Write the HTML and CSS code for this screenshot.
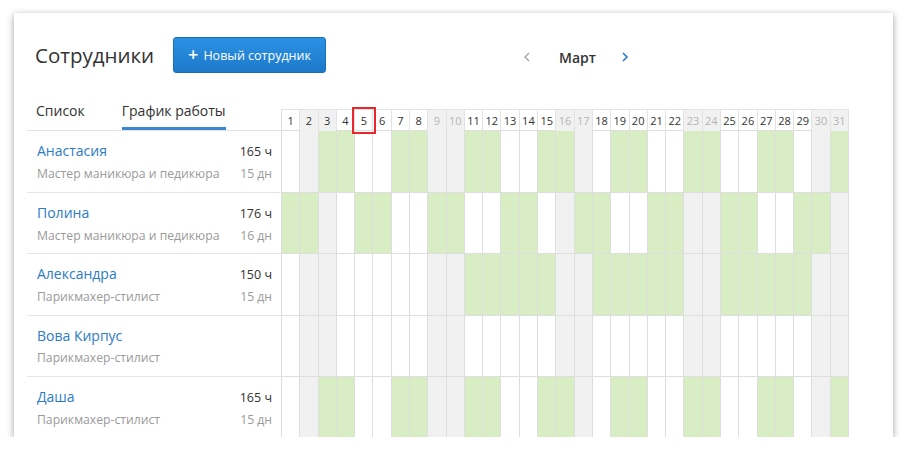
FILE: index.html
```html
<!DOCTYPE html>
<html lang="ru">
  <head>
    <meta charset="UTF-8" />
    <meta name="viewport" content="width=device-width, initial-scale=1.0" />
    <title>Сотрудники</title>
    <link rel="stylesheet" href="styles.css">
  </head>
  <body>
    <div class="card">
      <div class="top">
        <h1>Сотрудники</h1>
        <button class="btn-new" type="button"><span class="plus">+</span>Новый сотрудник</button>
        <div class="month">
          <svg class="arrow" width="8" height="10" viewBox="0 0 8 10"><polyline points="6,1 2,5 6,9" fill="none" stroke="#a0a0a0" stroke-width="1.3"/></svg>
          <span class="month-name">Март</span>
          <svg class="arrow" width="8" height="10" viewBox="0 0 8 10"><polyline points="2,1 6,5 2,9" fill="none" stroke="#2b7bc6" stroke-width="1.6"/></svg>
        </div>
      </div>

      <div class="row head">
        <div class="tabs">
          <a class="tab">Список</a>
          <a class="tab active">График работы</a>
        </div>
        <div class="days days-head" id="days-head"></div>
      </div>

      <div id="rows"></div>
    </div>

    <script>
      const weekends = [2, 3, 9, 10, 16, 17, 23, 24, 30, 31];
      const oddShift = [3, 4, 7, 8, 11, 12, 15, 16, 19, 20, 23, 24, 27, 28, 31];
      const people = [
        { name: "Анастасия", role: "Мастер маникюра и педикюра", hours: "165 ч", days: "15 дн", work: oddShift },
        { name: "Полина", role: "Мастер маникюра и педикюра", hours: "176 ч", days: "16 дн",
          work: [1, 2, 5, 6, 9, 10, 13, 14, 17, 18, 21, 22, 25, 26, 29, 30] },
        { name: "Александра", role: "Парикмахер-стилист", hours: "150 ч", days: "15 дн",
          work: [11, 12, 13, 14, 15, 18, 19, 20, 21, 22, 25, 26, 27, 28, 29] },
        { name: "Вова Кирпус", role: "Парикмахер-стилист", hours: "", days: "", work: [] },
        { name: "Даша", role: "Парикмахер-стилист", hours: "165 ч", days: "15 дн", work: oddShift },
      ];

      const head = document.getElementById("days-head");
      for (let d = 1; d <= 31; d++) {
        let cls = "day";
        if (weekends.includes(d)) cls += d > 3 ? " off faded" : " off";
        if (d === 5) cls += " today";
        head.insertAdjacentHTML("beforeend", `<div class="${cls}">${d}</div>`);
      }

      const rows = document.getElementById("rows");
      people.forEach((p) => {
        let cells = "";
        for (let d = 1; d <= 31; d++) {
          let cls = "cell";
          if (p.work.includes(d)) cls += " work";
          else if (weekends.includes(d)) cls += " off";
          cells += `<div class="${cls}"></div>`;
        }
        rows.insertAdjacentHTML("beforeend", `<div class="row">
            <div class="person">
              <div class="line"><a class="name">${p.name}</a><span class="hours">${p.hours}</span></div>
              <div class="line sub"><span>${p.role}</span><span>${p.days}</span></div>
            </div>
            <div class="days">${cells}</div>
          </div>`);
      });
    </script>
  </body>
</html>
```

FILE: styles.css
```css
body {
  margin: 0;
  background: #fff;
  font-family: "Open Sans", "Noto Sans", sans-serif;
  color: #333;
}

.card {
  margin: 13px 19px 0 14px;
  height: 424px;
  overflow: hidden;
  padding: 0 13px;
  background: #fff;
  box-shadow: 0 2px 7px rgba(0, 0, 0, 0.38);
  box-sizing: border-box;
}

.top {
  display: flex;
  align-items: center;
  height: 36px;
  padding-top: 24px;
}

h1 {
  width: 138px;
  margin: 0 0 0 8px;
  font-size: 20.5px;
  font-weight: 400;
  color: #333;
  line-height: 36px;
}

.btn-new {
  height: 36px;
  width: 153px;
  padding: 0;
  border: 1px solid #1a6fbd;
  border-radius: 3px;
  background: linear-gradient(#2b91e3, #1d79ca);
  color: #fff;
  font-family: inherit;
  font-size: 12.5px;
  display: flex;
  align-items: center;
  justify-content: center;
  gap: 5px;
}

.plus {
  font-size: 18px;
  font-weight: 600;
  line-height: 1;
  margin-top: -2px;
}

.month {
  display: flex;
  align-items: center;
  margin-left: 197px;
  margin-top: 4px;
}

.arrow {
  display: block;
}

.month-name {
  font-size: 14px;
  font-weight: 600;
  margin: 0 25px 0 28px;
  color: #333;
}

.row {
  display: flex;
  height: 61.5px;
}

.row.head {
  height: 58px;
  align-items: flex-end;
}

.tabs {
  width: 254px;
  display: flex;
  gap: 37px;
  padding-left: 9px;
  box-sizing: border-box;
  border-bottom: 1px solid #e3e3e3;
}

.tab {
  font-size: 14px;
  line-height: 20px;
  padding-bottom: 6px;
  border-bottom: 3px solid transparent;
  color: #333;
}

.tab.active {
  border-bottom-color: #3b87d2;
}

.days {
  width: 568px;
  display: grid;
  grid-template-columns: repeat(31, 1fr);
  border-left: 1px solid #dedede;
  border-bottom: 1px solid #dedede;
  box-sizing: border-box;
}

.days-head {
  height: 22px;
  border-top: 1px solid #e3e3e3;
}

.day {
  border-right: 1px solid #e3e3e3;
  font-size: 11px;
  line-height: 21px;
  text-align: center;
  color: #333;
}

.day.off {
  background: #f1f1f1;
}

.day.faded {
  color: #b5b5b5;
}

.day.today {
  position: relative;
  outline: 2px solid #e8262c;
  outline-offset: 1px;
  z-index: 1;
}

.cell {
  border-right: 1px solid #dedede;
}

.cell.off {
  background: #f1f1f1;
}

.cell.work {
  background: #d9edc4;
}

.person {
  width: 254px;
  box-sizing: border-box;
  padding: 10px 9px 0 10px;
  border-bottom: 1px solid #e6e6e6;
}

.line {
  display: flex;
  justify-content: space-between;
  align-items: baseline;
  line-height: 20px;
}

.name {
  font-size: 14px;
  color: #2b7bc6;
}

.hours {
  font-size: 12.5px;
  color: #333;
}

.line.sub {
  margin-top: 2px;
  font-size: 12.2px;
  color: #9a9a9a;
}
```
